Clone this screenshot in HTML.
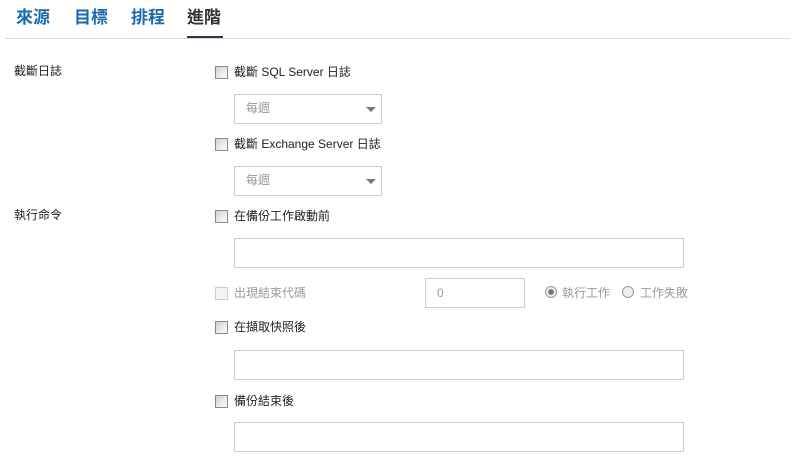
<!DOCTYPE html>
<html><head><meta charset="utf-8"><style>
body{margin:0;width:793px;height:470px;background:#fff;font-family:"Liberation Sans","Noto Sans CJK TC",sans-serif;font-size:12px;color:#222;position:relative;overflow:hidden}
.a{position:absolute}
.tab{position:absolute;top:7px;font-size:17px;font-weight:bold;color:#1a6aae;line-height:22px}
.cb{position:absolute;width:11px;height:11px;border:1px solid #888;background:linear-gradient(135deg,#d0d0d0,#fff)}
.lbl{position:absolute;font-size:12px;line-height:14px}
.box{position:absolute;border:1px solid #ccc;background:#fff;box-sizing:border-box}
.sel{color:#999;font-size:12px;line-height:27px;padding-left:11px}
.arr{position:absolute;right:5px;top:12px;width:0;height:0;border-left:5px solid transparent;border-right:5px solid transparent;border-top:5px solid #777}
.rad{position:absolute;width:10px;height:10px;border-radius:50%;border:1px solid #999;background:#eee}
</style></head><body>
<div class="tab" style="left:16px">來源</div>
<div class="tab" style="left:74px">目標</div>
<div class="tab" style="left:131px">排程</div>
<div class="tab" style="left:187px;color:#333">進階</div>
<div class="a" style="left:5px;top:38px;width:785px;height:1px;background:#d5d8dc"></div>
<div class="a" style="left:187px;top:36px;width:36px;height:2px;background:#33334d"></div>

<div class="lbl" style="left:14px;top:64px">截斷日誌</div>
<div class="cb" style="left:215px;top:66px"></div>
<div class="lbl" style="left:234px;top:65px">截斷 SQL Server 日誌</div>
<div class="box sel" style="left:234px;top:94px;width:148px;height:30px">每週<div class="arr"></div></div>
<div class="cb" style="left:215px;top:138px"></div>
<div class="lbl" style="left:234px;top:137px">截斷 Exchange Server 日誌</div>
<div class="box sel" style="left:234px;top:166px;width:148px;height:30px">每週<div class="arr"></div></div>

<div class="lbl" style="left:14px;top:208px">執行命令</div>
<div class="cb" style="left:215px;top:210px"></div>
<div class="lbl" style="left:234px;top:209px">在備份工作啟動前</div>
<div class="box" style="left:234px;top:238px;width:450px;height:30px"></div>

<div class="cb" style="left:215px;top:287px;border-color:#ccc;background:#f4f4f4"></div>
<div class="lbl" style="left:234px;top:286px;color:#999">出現結束代碼</div>
<div class="box" style="left:425px;top:278px;width:100px;height:30px;color:#999;line-height:28px;padding-left:11px">0</div>
<div class="rad" style="left:545px;top:286px;background:radial-gradient(circle,#777 35%,#eee 45%)"></div>
<div class="lbl" style="left:562px;top:286px;color:#999">執行工作</div>
<div class="rad" style="left:622px;top:286px"></div>
<div class="lbl" style="left:640px;top:286px;color:#999">工作失敗</div>

<div class="cb" style="left:215px;top:321px"></div>
<div class="lbl" style="left:234px;top:320px">在擷取快照後</div>
<div class="box" style="left:234px;top:350px;width:450px;height:30px"></div>
<div class="cb" style="left:215px;top:395px"></div>
<div class="lbl" style="left:234px;top:394px">備份結束後</div>
<div class="box" style="left:234px;top:422px;width:450px;height:30px"></div>
</body></html>
